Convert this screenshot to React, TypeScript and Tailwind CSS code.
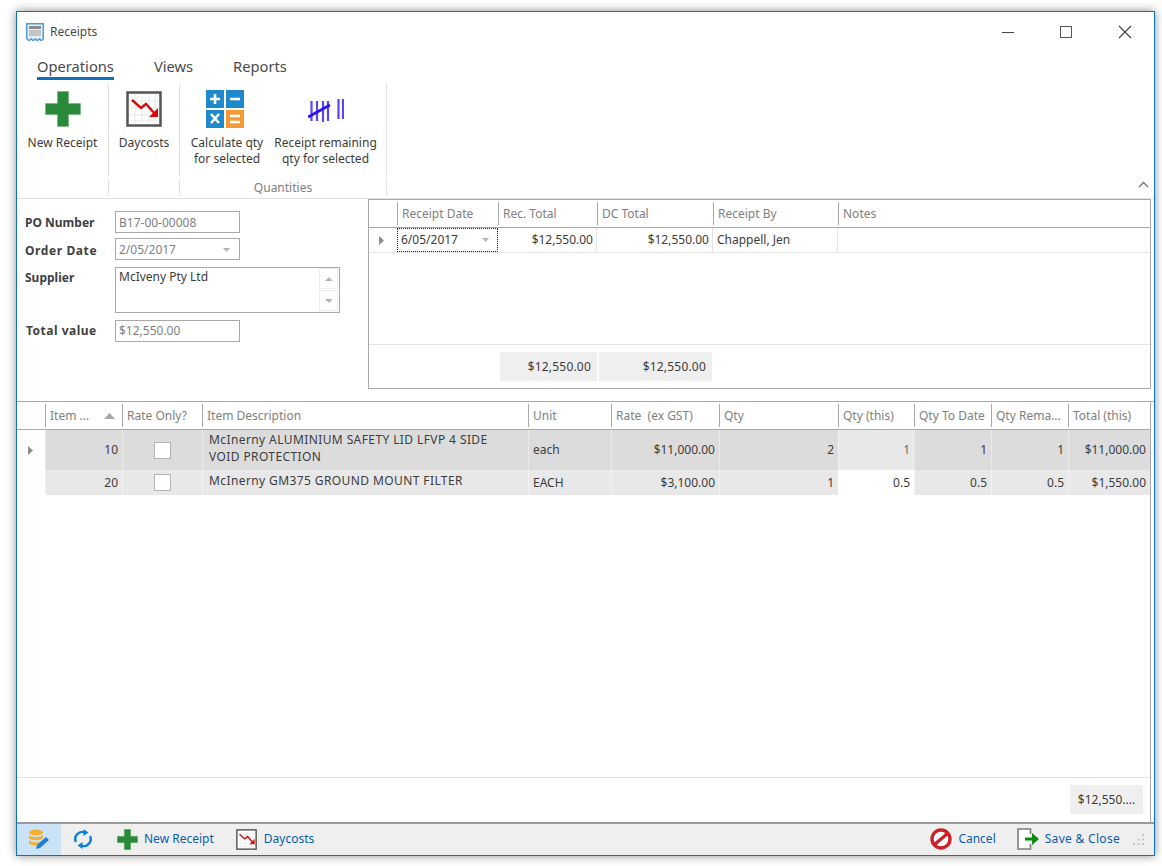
import React from "react"

const PlusIcon = ({ s = 36 }: { s?: number }) => (
  <svg width={s} height={s} viewBox="0 0 36 36">
    <path d="M12.500 0.500h11v12h12v11h-12v12h-11v-12h-12v-11h12z" fill="#2b8a3a" stroke="#6fb07a" strokeWidth="0.6" />
  </svg>
)

const ChartIcon = ({ s = 36 }: { s?: number }) => (
  <svg width={s} height={s} viewBox="0 0 36 36">
    <rect x="1.500" y="1.500" width="33" height="33" fill="#fff" stroke="#555" strokeWidth="2.500" />
    <path d="M3 10h30M3 17h30M3 24h30M3 30h30M9 3v30M16 3v30M23 3v30M29 3v30" stroke="#e8e8e8" strokeWidth="1" />
    <path d="M6 9l9 8 5-4 9 10" fill="none" stroke="#d60a0a" strokeWidth="2.400" />
    <path d="M32 17v9h-9z" fill="#d60a0a" />
  </svg>
)

const CalcIcon = () => (
  <svg width="38" height="38" viewBox="0 0 38 38">
    <rect x="0" y="0" width="18" height="18" fill="#1f8acb" />
    <rect x="20" y="0" width="18" height="18" fill="#1f8acb" />
    <rect x="0" y="20" width="18" height="18" fill="#1f8acb" />
    <rect x="20" y="20" width="18" height="18" fill="#f59a35" />
    <path d="M4 9h10M9 4v10M24 9h10M5 24l8 9M13 24l-8 9" stroke="#fff" strokeWidth="2.600" />
    <path d="M24 26h10M24 32h10" stroke="#fff" strokeWidth="2.400" />
  </svg>
)

const TallyIcon = () => (
  <svg width="36" height="23" viewBox="0 0 36 23">
    <path d="M3.500 2v20M9 2v20M15 2v21M20 2v20M30.500 0v20M35 0v20" stroke="#5a45f0" strokeWidth="2.200" />
    <path d="M0 18L22 6" stroke="#2a10f0" strokeWidth="2.600" />
  </svg>
)

const ReceiptIcon = () => (
  <svg width="18" height="18" viewBox="0 0 18 18">
    <path d="M0.750 0.750h16.500v15l-2 2-2-2-2 2-2-2-2 2-2-2-2 2-2.500-2z" fill="#eaeff4" stroke="#4f9be0" strokeWidth="1.500" />
    <rect x="3" y="3" width="12" height="3" fill="#8c8c8c" />
    <path d="M3 8h12M3 10h12M3 12h12" stroke="#9a9a9a" />
  </svg>
)

const SaveIcon = () => (
  <svg width="24" height="22" viewBox="0 0 24 22">
    <path d="M13.500 6V1H1v20h12.500v-5" fill="#fff" stroke="#7f7f7f" strokeWidth="1.600" />
    <path d="M8 9.500h7V5l7 6-7 6v-4.500H8z" fill="#0d8a12" />
  </svg>
)

const CancelIcon = () => (
  <svg width="22" height="22" viewBox="0 0 22 22">
    <circle cx="11" cy="11" r="9" fill="#fff" stroke="#cc2229" strokeWidth="3.400" />
    <path d="M5 16L17 6" stroke="#cc2229" strokeWidth="3.400" />
  </svg>
)

const RefreshIcon = () => (
  <svg width="18" height="20" viewBox="0 0 18 20">
    <path d="M2 13A7 7 0 0 1 11 3.500M16 7A7 7 0 0 1 7 16.500" fill="none" stroke="#0f7fd8" strokeWidth="2.400" />
    <path d="M9.500 0l5 3.500-5 3.500zM8.500 13l-5 3.500 5 3.500z" fill="#0f7fd8" />
  </svg>
)

const DbEditIcon = () => (
  <svg width="22" height="22" viewBox="0 0 22 22">
    <ellipse cx="8" cy="3.500" rx="7" ry="3" fill="#f4b02c" />
    <path d="M1 6c2 3 12 3 14 0v3c-2 3-12 3-14 0z" fill="#f4b02c" />
    <path d="M1 11c2 3 10 3 13 1l-3 4c-5 1-9 0-10-2z" fill="#f4b02c" />
    <path d="M8 20l1-4 9-8 3 3-9 8z" fill="#1f7fd6" />
  </svg>
)

const Caret = ({ up, w = 7 }: { up?: boolean; w?: number }) => (
  <svg width={w} height="4" viewBox="0 0 9 5" preserveAspectRatio="none">
    <path d={up ? "M0 5L4.500 0 9 5z" : "M0 0h9L4.500 5z"} fill="#b5b5b5" />
  </svg>
)

const RowArrow = () => (
  <svg width="5" height="9" viewBox="0 0 5 9">
    <path d="M0 0l5 4.500L0 9z" fill="#8c8c8c" />
  </svg>
)

function RibbonBtn({ icon, lines, w }: { icon: React.ReactNode; lines: string[]; w: string }) {
  return (
    <div className={`flex flex-col items-center ${w}`}>
      <div className="flex h-[50px] items-center justify-center">{icon}</div>
      <div className="mt-[1px] text-center leading-[16px]">
        {lines.map((l) => (
          <div key={l}>{l}</div>
        ))}
      </div>
    </div>
  )
}

function RibbonGroup({ w, label, children }: { w: string; label?: string; children: React.ReactNode }) {
  return (
    <div className={`flex flex-col ${w}`}>
      <div className="flex h-[93px] border-r border-[#e4e4e4] pt-[1px]">{children}</div>
      <div className="mt-[2px] h-[18px] border-r border-[#e4e4e4] pt-[2px] text-center leading-[16px] text-[#808080]">{label}</div>
    </div>
  )
}

function FormRow({ label, className, labelClass, children }: { label: string; className?: string; labelClass?: string; children: React.ReactNode }) {
  return (
    <div className={`flex ${className ?? ""}`}>
      <div className={`w-[90px] font-bold leading-[20px] text-[#404040] ${labelClass ?? ""}`}>{label}</div>
      {children}
    </div>
  )
}

const inputCls = "flex h-[22px] w-[125px] items-center justify-between border border-[#a9a9a9] px-[3px] text-[#808080]"

const topCols = "grid-cols-[28px_101px_99px_116px_125px_1fr]"
const bottomCols = "grid-cols-[28px_77px_80px_326px_83px_108px_119px_76px_77px_77px_1fr]"

function Head({ children, className }: { children?: React.ReactNode; className?: string }) {
  return (
    <div className={`flex items-center px-[4px] text-[#808080] ${className ?? ""}`}>
      {children}
    </div>
  )
}

function Cell({ children, className }: { children?: React.ReactNode; className?: string }) {
  return <div className={`flex items-center whitespace-pre-line border-l border-white/40 px-[4px] ${className ?? ""}`}>{children}</div>
}

const Check = () => <div className="h-[17px] w-[17px] border border-[#b4b4b4] bg-white" />

function BottomRow({ cells, bg, qtyBg, qtyColor, h, first }: { cells: string[]; bg: string; qtyBg: string; qtyColor: string; h: string; first?: boolean }) {
  return (
    <div className={`grid ${bottomCols} ${h}`}>
      <div className="flex items-center justify-center bg-white pr-[1px]">{first && <RowArrow />}</div>
      <Cell className={`${bg} justify-end`}>{cells[0]}</Cell>
      <Cell className={`${bg} justify-center`}><Check /></Cell>
      <Cell className={`${bg} pb-[4px] pl-[6px] leading-[17px] tracking-[0.4px]`}>{cells[1]}</Cell>
      <Cell className={bg}>{cells[2]}</Cell>
      <Cell className={`${bg} justify-end`}>{cells[3]}</Cell>
      <Cell className={`${bg} justify-end`}>{cells[4]}</Cell>
      <Cell className={`${qtyBg} ${qtyColor} justify-end`}>{cells[5]}</Cell>
      <Cell className={`${bg} justify-end`}>{cells[6]}</Cell>
      <Cell className={`${bg} justify-end`}>{cells[7]}</Cell>
      <Cell className={`${bg} justify-end`}>{cells[8]}</Cell>
    </div>
  )
}

export default function App() {
  return (
    <div className="h-[866px] w-[1162px] bg-white pl-[16px] pt-[11px] font-['Noto_Sans',sans-serif] text-[12px] text-[#3c3c3c]">
      <div className="flex h-[845px] w-[1139px] flex-col border border-[#0f6fc0] bg-white shadow-[0_0_9px_rgba(0,0,0,0.45)]">
        {/* title bar */}
        <div className="flex h-[38px] shrink-0 items-center pl-[9px] pt-[2px]">
          <ReceiptIcon />
          <span className="ml-[6px] text-[#4a4a4a]">Receipts</span>
          <div className="ml-auto flex items-center gap-[46px] pr-[22px]">
            <div className="h-[1px] w-[12px] bg-[#444]" />
            <div className="h-[12px] w-[12px] border border-[#555]" />
            <svg width="14" height="14" viewBox="0 0 14 14">
              <path d="M1 1l12 12M13 1L1 13" stroke="#444" strokeWidth="1.200" />
            </svg>
          </div>
        </div>

        {/* tabs */}
        <div className="flex h-[31px] shrink-0 gap-[40px] pl-[20px] pt-[4px] text-[14.7px] leading-[24px] text-[#4a4a4a]">
          <div className="h-[26px] border-b-[3px] border-[#0f6fc0]">Operations</div>
          <div>Views</div>
          <div>Reports</div>
        </div>

        {/* ribbon */}
        <div className="flex h-[118px] shrink-0 border-b border-[#e2e2e2] pt-[2px]">
          <RibbonGroup w="w-[92px]">
            <RibbonBtn w="w-[91px]" icon={<PlusIcon />} lines={["New Receipt"]} />
          </RibbonGroup>
          <RibbonGroup w="w-[71px]">
            <RibbonBtn w="w-[70px]" icon={<ChartIcon />} lines={["Daycosts"]} />
          </RibbonGroup>
          <RibbonGroup w="w-[207px]" label="Quantities">
            <RibbonBtn w="w-[94px]" icon={<span className="mr-[5px] flex"><CalcIcon /></span>} lines={["Calculate qty", "for selected"]} />
            <RibbonBtn w="w-[103px]" icon={<span className="mt-[3px] flex"><TallyIcon /></span>} lines={["Receipt remaining", "qty for selected"]} />
          </RibbonGroup>
          <div className="ml-auto flex items-end pb-[10px] pr-[5px]">
            <svg width="11" height="7" viewBox="0 0 11 7">
              <path d="M1 6l4.500-4.500L10 6" fill="none" stroke="#777" strokeWidth="1.300" />
            </svg>
          </div>
        </div>

        {/* header form + receipts grid */}
        <div className="flex h-[202px] shrink-0 pl-[8px]">
          <div className="w-[343px] shrink-0 pt-[12px]">
            <FormRow label="PO Number" labelClass="pt-[2px]">
              <div className={`${inputCls} pt-[2px]`}>B17-00-00008</div>
            </FormRow>
            <FormRow label="Order Date" className="mt-[5px]" labelClass="pt-[3px] tracking-[0.6px]">
              <div className={`${inputCls} pt-[2px]`}>
                2/05/2017
                <span className="mr-[6px] flex"><Caret /></span>
              </div>
            </FormRow>
            <FormRow label="Supplier" className="mt-[6px]" labelClass="pt-[1px]">
              <div className="flex h-[46px] w-[225px] justify-between border border-[#a9a9a9] pl-[3px]">
                McIveny Pty Ltd
                <div className="flex w-[20px] flex-col">
                  <div className="flex h-[21px] w-[19px] items-center justify-center border border-[#ececec]"><Caret up w={8} /></div>
                  <div className="mt-[1px] flex h-[21px] w-[19px] items-center justify-center border border-[#ececec]"><Caret w={8} /></div>
                </div>
              </div>
            </FormRow>
            <FormRow label="Total value" className="mt-[7px]" labelClass="pl-[1px] pt-[1px] tracking-[0.5px]">
              <div className={inputCls}>$12,550.00</div>
            </FormRow>
          </div>

          <div className="flex h-[190px] w-[783px] flex-col border border-[#a9a9a9]">
            <div className={`grid ${topCols} h-[28px] shrink-0 border-b border-[#a9a9a9]`}>
              <div />
              {["Receipt Date", "Rec. Total", "DC Total", "Receipt By", "Notes"].map((h) => (
                <Head key={h} className="my-[2px] border-l border-[#a9a9a9]">{h}</Head>
              ))}
            </div>
            <div className={`grid ${topCols} h-[25px] shrink-0 border-b border-[#e4e4e4]`}>
              <div className="flex items-center justify-center pr-[4px]"><RowArrow /></div>
              <div className="flex items-center justify-between border border-dotted border-[#222] px-[3px]">
                6/05/2017
                <span className="mr-[5px] flex"><Caret /></span>
              </div>
              <div className="flex items-center justify-end border-r border-[#e4e4e4] px-[3px]">$12,550.00</div>
              <div className="flex items-center justify-end border-r border-[#e4e4e4] px-[3px]">$12,550.00</div>
              <div className="flex items-center border-r border-[#e4e4e4] px-[4px]">Chappell, Jen</div>
              <div />
            </div>
            <div className="flex-1" />
            <div className="h-[44px] shrink-0 border-t border-[#e4e4e4] pt-[7px]">
              <div className={`grid ${topCols} h-[29px]`}>
                <div />
                <div />
                <div className="ml-[2px] flex items-center justify-end bg-[#efefef] px-[6px] tracking-[0.2px]">$12,550.00</div>
                <div className="ml-[2px] mr-[1px] flex items-center justify-end bg-[#efefef] px-[6px] tracking-[0.2px]">$12,550.00</div>
              </div>
            </div>
          </div>
        </div>

        {/* items grid */}
        <div className="flex min-h-0 flex-1 flex-col border-t border-[#a9a9a9] pr-[3px]">
          <div className="flex flex-1 flex-col border-r border-[#a9a9a9]">
            <div className={`grid ${bottomCols} h-[28px] shrink-0 border-b border-[#a9a9a9]`}>
              <div />
              <Head className="my-[2px] justify-between border-l border-[#a9a9a9]">
                Item ...
                <span className="mr-[3px] flex"><svg width="11" height="6" viewBox="0 0 11 6"><path d="M0 6l5.500-6L11 6z" fill="#a6a6a6" /></svg></span>
              </Head>
              {["Rate Only?", "Item Description", "Unit", "Rate  (ex GST)", "Qty", "Qty (this)", "Qty To Date", "Qty Rema...", "Total (this)"].map((h) => (
                <Head key={h} className="my-[2px] whitespace-pre border-l border-[#a9a9a9]">{h}</Head>
              ))}
            </div>
            <BottomRow
              first
              h="h-[40px]"
              bg="bg-[#dcdcdc]"
              qtyBg="bg-[#e8e8e8]"
              qtyColor="text-[#6a6a6a]"
              cells={["10", "McInerny ALUMINIUM SAFETY LID LFVP 4 SIDE\nVOID PROTECTION", "each", "$11,000.00", "2", "1", "1", "1", "$11,000.00"]}
            />
            <BottomRow
              h="h-[25px]"
              bg="bg-[#e8e8e8]"
              qtyBg="bg-white"
              qtyColor="text-[#3c3c3c]"
              cells={["20", "McInerny GM375 GROUND MOUNT FILTER", "EACH", "$3,100.00", "1", "0.5", "0.5", "0.5", "$1,550.00"]}
            />
            <div className="flex-1" />
            <div className="flex h-[45px] shrink-0 items-start justify-end border-t border-[#e4e4e4] pr-[7px] pt-[7px]">
              <div className="flex h-[29px] w-[73px] items-center justify-center bg-[#efefef]">$12,550....</div>
            </div>
          </div>
        </div>

        {/* status bar */}
        <div className="flex h-[33px] shrink-0 items-center border-t-2 border-[#9a9a9a] bg-[#efefef] pb-[1px] text-[#0b5cad]">
          <div className="-mb-[1px] flex h-[31px] w-[44px] items-center justify-center bg-[#cbe3f7]"><DbEditIcon /></div>
          <div className="ml-[13px] flex"><RefreshIcon /></div>
          <div className="ml-[25px] flex items-center gap-[6px]"><PlusIcon s={21} />New Receipt</div>
          <div className="ml-[22px] flex items-center gap-[7px]"><ChartIcon s={21} />Daycosts</div>
          <div className="ml-auto flex items-center gap-[6px]"><CancelIcon />Cancel</div>
          <div className="ml-[21px] flex items-center gap-[4px] tracking-[0.3px]"><SaveIcon />Save &amp; Close</div>
          <svg className="ml-[12px] mr-[9px]" width="13" height="13" viewBox="0 0 13 13" fill="#c4c4c4">
            <rect x="10" y="1" width="2" height="2" />
            <rect x="5.500" y="5.500" width="2" height="2" />
            <rect x="10" y="5.500" width="2" height="2" />
            <rect x="1" y="10" width="2" height="2" />
            <rect x="5.500" y="10" width="2" height="2" />
            <rect x="10" y="10" width="2" height="2" />
          </svg>
        </div>
      </div>
    </div>
  )
}
